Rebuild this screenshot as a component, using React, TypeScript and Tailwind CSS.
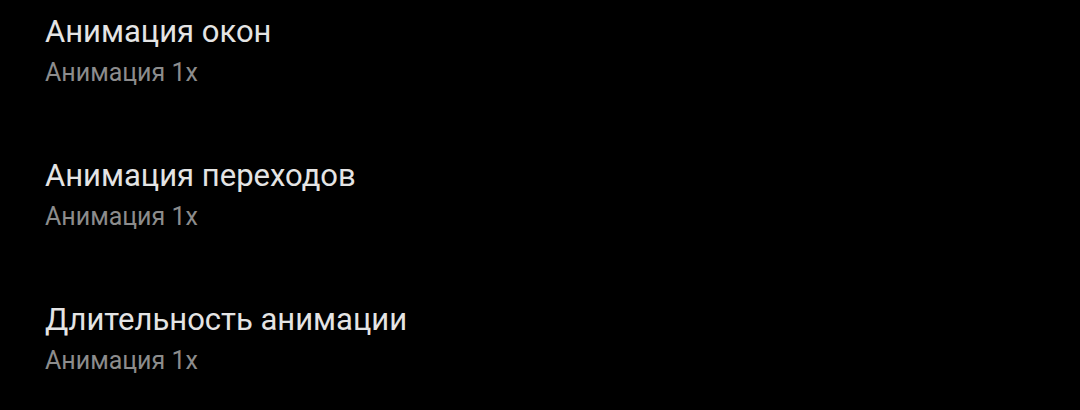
const rows = [
  { title: "Анимация окон", value: "Анимация 1x" },
  { title: "Анимация переходов", value: "Анимация 1x" },
  { title: "Длительность анимации", value: "Анимация 1x" },
];

export default function App() {
  return (
    <div className="h-[410px] w-[1080px] overflow-hidden bg-black font-['Roboto',sans-serif]">
      <div className="flex flex-col gap-[71px] pl-[45px] pt-[14px]">
        {rows.map((row) => (
          <div key={row.title} className="flex flex-col gap-[9px]">
            <div className="text-[31px] leading-[36px] text-[#e4e4e4]">{row.title}</div>
            <div className="text-[25px] leading-[28px] text-[#8c8c8c]">{row.value}</div>
          </div>
        ))}
      </div>
    </div>
  );
}
